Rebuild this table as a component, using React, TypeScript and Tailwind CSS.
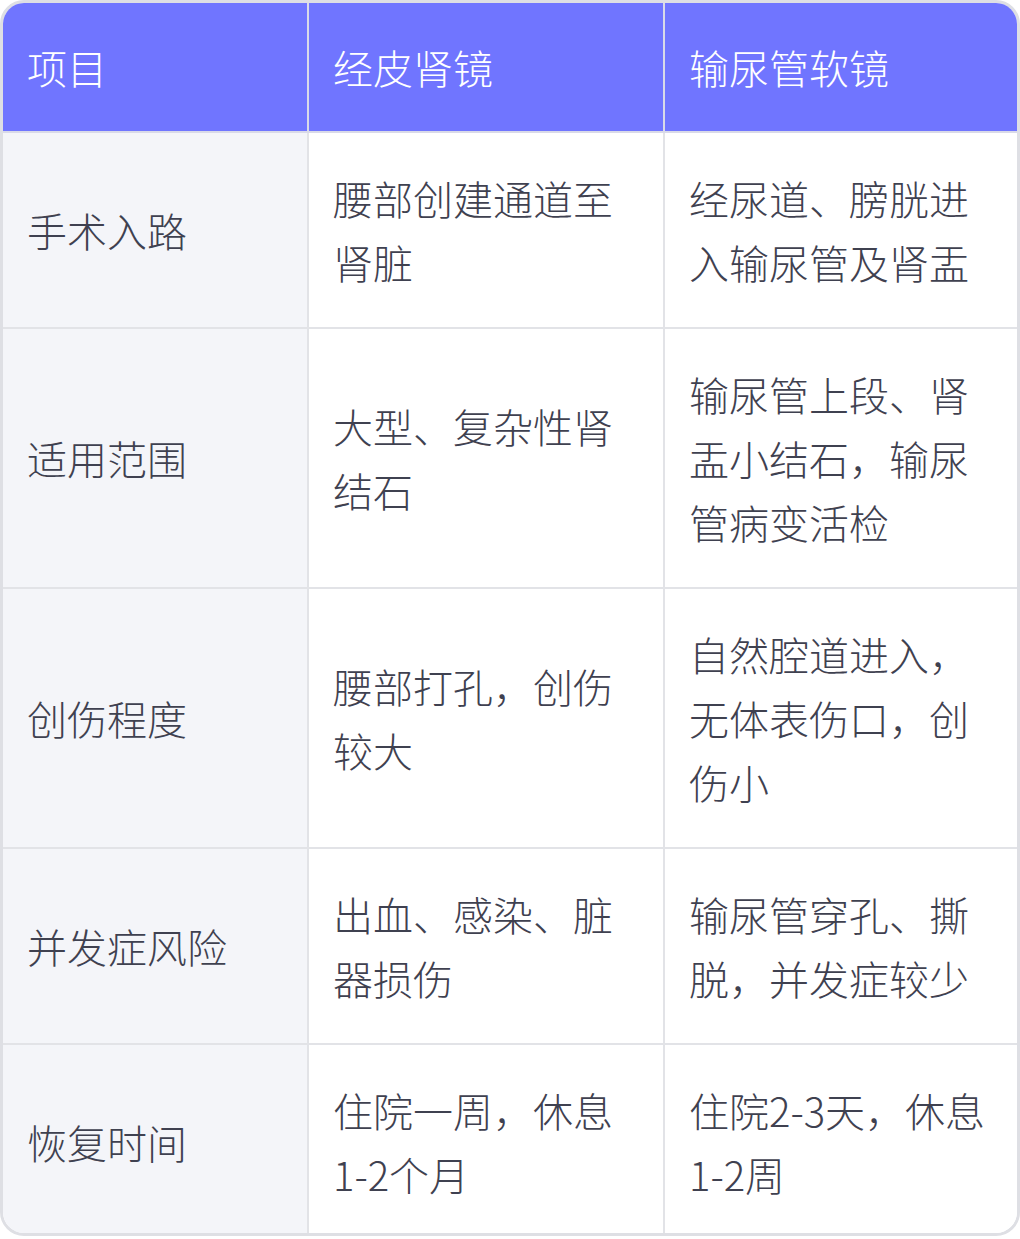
const rows: [string, string, string][] = [
  ["手术入路", "腰部创建通道至肾脏", "经尿道、膀胱进入输尿管及肾盂"],
  ["适用范围", "大型、复杂性肾结石", "输尿管上段、肾盂小结石，输尿管病变活检"],
  ["创伤程度", "腰部打孔，创伤较大", "自然腔道进入，无体表伤口，创伤小"],
  ["并发症风险", "出血、感染、脏器损伤", "输尿管穿孔、撕脱，并发症较少"],
  ["恢复时间", "住院一周，休息1-2个月", "住院2-3天，休息1-2周"],
];

export default function App() {
  return (
    <div
      className="w-[1020px] bg-white"
      style={{ fontFamily: '"Noto Sans CJK SC", "Noto Sans", sans-serif' }}
    >
      <div className="overflow-hidden rounded-[24px] border-[3px] border-[#dedfe4]">
        <div className="grid grid-cols-[306px_356px_1fr] text-[40px] font-light leading-[64px]">
          {/* Header */}
          <div className="flex items-center border-r-2 border-b-2 border-[#d9dae8] bg-[#7075ff] px-6 py-8 text-white">
            项目
          </div>
          <div className="flex items-center border-r-2 border-b-2 border-[#d9dae8] bg-[#7075ff] px-6 py-8 text-white">
            经皮肾镜
          </div>
          <div className="flex items-center border-b-2 border-[#d9dae8] bg-[#7075ff] px-6 py-8 text-white">
            输尿管软镜
          </div>

          {rows.map(([label, a, b], i) => {
            const last = i === rows.length - 1;
            const rowCls = last ? "pt-[33px] pb-[27px]" : "py-[33px] border-b-2";
            return [
              <div
                key={`l${i}`}
                className={`flex items-center border-r-2 border-[#e2e3e7] bg-[#f4f5f9] px-6 text-[#3f4150] ${rowCls}`}
              >
                {label}
              </div>,
              <div
                key={`a${i}`}
                className={`flex items-center border-r-2 border-[#e2e3e7] bg-white px-6 text-[#3f4150] ${rowCls}`}
              >
                {a}
              </div>,
              <div
                key={`b${i}`}
                className={`flex items-center border-[#e2e3e7] bg-white px-6 text-[#3f4150] ${rowCls}`}
              >
                {b}
              </div>,
            ];
          })}
        </div>
      </div>
    </div>
  );
}
